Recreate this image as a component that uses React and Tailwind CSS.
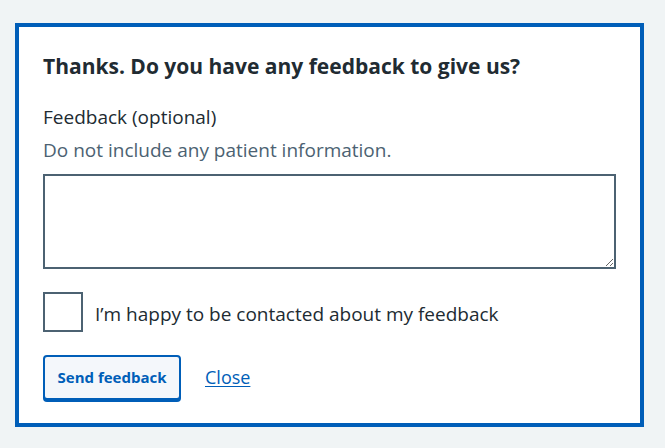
import React, { useState } from 'react';

export default function App() {
  const [contact, setContact] = useState(false);
  const [text, setText] = useState('');

  return (
    <div className="min-h-screen bg-[#f0f4f5] pt-[23px] pl-[15px] font-['Open_Sans',sans-serif] text-[#212b32]">
      <div className="w-[629px] h-[404px] border-4 border-[#005eb8] bg-white px-6 pt-[25px]">
        <h2 className="text-[21px] leading-[28px] font-bold">Thanks. Do you have any feedback to give us?</h2>

        <div className="mt-[23px]">
          <label htmlFor="feedback" className="block text-[19px] leading-[28px]">Feedback (optional)</label>
          <div className="mt-[5px] text-[19px] leading-[28px] text-[#4c6272]">Do not include any patient information.</div>
          <textarea
            id="feedback"
            value={text}
            onChange={(e) => setText(e.target.value)}
            className="block mt-[10px] w-[573px] h-[95px] border-2 border-[#4c6272] bg-white p-2 outline-none"
          />
        </div>

        <label className="mt-[23px] flex items-center gap-3 cursor-pointer">
          <input
            type="checkbox"
            checked={contact}
            onChange={(e) => setContact(e.target.checked)}
            className="appearance-none w-10 h-10 border-2 border-[#4c6272] bg-white shrink-0"
          />
          <span className="text-[19px] leading-[28px] pt-[3px]">I’m happy to be contacted about my feedback</span>
        </label>

        <div className="mt-[23px] flex items-center gap-6">
          <button className="w-[138px] h-[45px] rounded border-2 border-[#005eb8] bg-[#f4f7fb] shadow-[0_2px_0_#005eb8] text-[#005eb8] text-[15px] font-bold">
            Send feedback
          </button>
          <a href="#" className="text-[#005eb8] text-[18px] underline underline-offset-2">Close</a>
        </div>
      </div>
    </div>
  );
}
